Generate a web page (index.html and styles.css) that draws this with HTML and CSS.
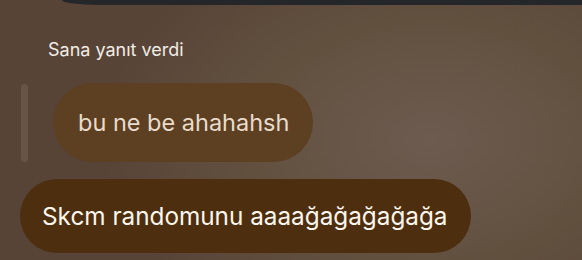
FILE: index.html
```html
<!DOCTYPE html>
<html lang="tr">
<head>
    <meta charset="UTF-8">
    <meta name="viewport" content="width=device-width, initial-scale=1.0">
    <title>Yanıt</title>
    <link rel="stylesheet" href="styles.css">
</head>
<body>
    <div class="topBar"></div>

    <div class="replyLabel">Sana yanıt verdi</div>

    <div class="quoteRow">
        <div class="quoteLine"></div>
        <div class="bubble quoteBubble">bu ne be ahahahsh</div>
    </div>

    <div class="bubble mainBubble">Skcm randomunu aaaağağağağağa</div>
</body>
</html>
```
FILE: styles.css
```css
*{
    padding: 0;
    margin: 0;
    box-sizing: border-box;
}
html,body{
    height: 100%;
}
body{
    overflow: hidden;
    font-family: Inter, "Noto Sans", sans-serif;
    background: radial-gradient(ellipse 330px 220px at 430px 140px, #6d5b50 0%, #62503f 55%, #574437 100%);
    background-color: #574437;
}
.topBar{
    margin-left: 62px;
    height: 5px;
    background: #25262a;
    border-bottom-left-radius: 38px 5px;
}
.replyLabel{
    margin-top: 34px;
    padding-left: 48px;
    font-size: 18px;
    line-height: 22px;
    color: #f2ece6;
}
.quoteRow{
    display: flex;
    align-items: center;
    gap: 25px;
    margin-top: 22px;
    padding-left: 21px;
}
.quoteLine{
    width: 7px;
    height: 78px;
    border-radius: 4px;
    background: rgba(255, 255, 255, 0.09);
}
.bubble{
    display: flex;
    align-items: center;
    border-radius: 40px;
    white-space: nowrap;
}
.quoteBubble{
    height: 79px;
    padding: 0 24px 0 25px;
    font-size: 23.5px;
    color: #e9dccd;
    background: #5d3f22;
}
.mainBubble{
    display: inline-flex;
    height: 74px;
    margin: 17px 0 0 20px;
    padding: 0 24px 0 22px;
    font-size: 24.3px;
    color: #fdf6ec;
    background: #4d2f10;
}
```
